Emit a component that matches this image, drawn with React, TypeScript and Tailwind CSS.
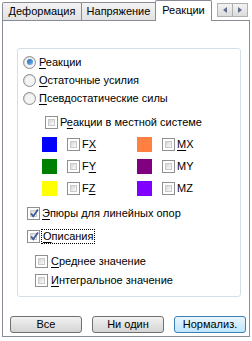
import React from 'react';

// Win7-style "Реакции" settings page of a tabbed dialog

function Label({ text, u }: { text: string; u?: number }) {
    if (u === undefined) return <span>{text}</span>;
    return (
        <span>
            {text.slice(0, u)}
            <span className="underline underline-offset-[2px]">{text[u]}</span>
            {text.slice(u + 1)}
        </span>
    );
}

function Box({ checked }: { checked?: boolean }) {
    return (
        <div className="relative w-[13px] h-[13px] shrink-0 border border-[#8e8f8f] bg-white p-[2px]">
            <div className="w-full h-full border border-[#c9c9c9] bg-gradient-to-br from-[#d6d6d6] to-[#fbfbfb]" />
            {checked && (
                <svg className="absolute left-[1px] top-[0px] w-[11px] h-[11px]" viewBox="0 0 11 11">
                    <path d="M2 5.5 L4.3 8.3 L9 1.5" fill="none" stroke="#3f5a9a" strokeWidth="1.8" />
                </svg>
            )}
        </div>
    );
}

function Radio({ checked }: { checked?: boolean }) {
    return (
        <div className="w-[13px] h-[13px] shrink-0 rounded-full border border-[#8e8f8f] bg-gradient-to-br from-[#d2d2d2] to-[#fafafa] flex items-center justify-center">
            <div className="w-[9px] h-[9px] rounded-full bg-[#f4f4f4] flex items-center justify-center">
                {checked && <div className="w-[6px] h-[6px] rounded-full bg-gradient-to-br from-[#1f5fb8] to-[#7cbcf0]" />}
            </div>
        </div>
    );
}

function Tab({ text, w, active }: { text: string; w: string; active?: boolean }) {
    if (active) {
        return (
            <div className={`${w} h-[21px] -mb-px relative z-10 bg-white border border-b-0 border-[#898c95] rounded-t-[2px] flex justify-center pt-[3px]`}>
                {text}
            </div>
        );
    }
    return (
        <div className={`${w} h-[18px] -mr-px border border-b-0 border-[#898c95] rounded-t-[2px] bg-gradient-to-b from-[#f3f3f3] to-[#e2e2e2] flex justify-center pt-[2px]`}>
            {text}
        </div>
    );
}

function Btn({ text, def }: { text: string; def?: boolean }) {
    return (
        <div
            className={`w-[72px] h-[17px] rounded-[3px] border flex items-center justify-center ${
                def
                    ? 'border-[#3c7fb1] bg-gradient-to-b from-[#eaf6fd] to-[#bee6fd]'
                    : 'border-[#707070] bg-gradient-to-b from-[#f2f2f2] to-[#d4d4d4]'
            }`}
        >
            {text}
        </div>
    );
}

const swatches = [
    { c: 'bg-[#0000ff]', f: 'FX', m: 'MX', mu: 0 },
    { c: 'bg-[#008000]', f: 'FY', m: 'MY' },
    { c: 'bg-[#ffff00]', f: 'FZ', m: 'MZ' },
];
const right = ['bg-[#ff8040]', 'bg-[#800080]', 'bg-[#8000ff]'];

export default function App() {
    return (
        <div className="w-[252px] h-[341px] bg-white text-black text-[11px] leading-[13px] font-['Liberation_Sans',Arial,sans-serif] overflow-hidden">
            {/* Tab strip */}
            <div className="h-[20px] flex items-end pl-[2px]">
                <Tab text="Деформация" w="w-[80px]" />
                <Tab text="Напряжение" w="w-[75px]" />
                <Tab text="Реакции" w="w-[57px]" active />
                <div className="ml-[5px] mb-[3px] flex self-end">
                    <div className="w-[16px] h-[14px] border border-[#b0b0b0] bg-gradient-to-b from-[#f3f3f3] to-[#dcdcdc] flex items-center justify-center">
                        <svg width="4" height="6" viewBox="0 0 4 6"><path d="M4 0 L0 3 L4 6 Z" fill="#5d6d8c" /></svg>
                    </div>
                    <div className="w-[16px] h-[14px] -ml-px border border-[#b0b0b0] bg-gradient-to-b from-[#f3f3f3] to-[#dcdcdc] flex items-center justify-center">
                        <svg width="4" height="6" viewBox="0 0 4 6"><path d="M0 0 L4 3 L0 6 Z" fill="#5d6d8c" /></svg>
                    </div>
                </div>
            </div>

            {/* Panel */}
            <div className="ml-[2px] w-[248px] h-[317px] border border-[#898c95] bg-white">
                {/* Group box */}
                <div className="ml-[14px] mt-[27px] w-[224px] h-[249px] border border-[#d5dfe5] rounded-[3px] pt-[4px]">
                    <div className="h-[18px] flex items-center gap-[3px] pl-[5px]">
                        <Radio checked />
                        <Label text="Реакции" u={0} />
                    </div>
                    <div className="h-[18px] flex items-center gap-[3px] pl-[5px]">
                        <Radio />
                        <Label text="Остаточные усилия" u={0} />
                    </div>
                    <div className="h-[18px] flex items-center gap-[3px] pl-[5px]">
                        <Radio />
                        <Label text="Псевдостатические силы" u={0} />
                    </div>

                    <div className="mt-[6px] h-[18px] flex items-center gap-[2px] pl-[27px]">
                        <Box />
                        <Label text="Реакции в местной системе" u={1} />
                    </div>

                    <div className="mt-[2px] pl-[24px] flex flex-col">
                        {swatches.map((s, i) => (
                            <div key={s.f} className="h-[22px] flex items-center">
                                <div className={`w-[15px] h-[15px] ${s.c}`} />
                                <div className="ml-[10px] w-[70px] flex items-center gap-[2px]">
                                    <Box />
                                    <Label text={s.f} u={1} />
                                </div>
                                <div className={`w-[15px] h-[15px] ${right[i]}`} />
                                <div className="ml-[10px] flex items-center gap-[2px]">
                                    <Box />
                                    <Label text={s.m} u={s.mu} />
                                </div>
                            </div>
                        ))}
                    </div>

                    <div className="mt-[5px] h-[18px] flex items-center gap-[2px] pl-[9px]">
                        <Box checked />
                        <Label text="Эпюры для линейных опор" u={0} />
                    </div>
                    <div className="mt-[5px] h-[18px] flex items-center gap-[1px] pl-[9px]">
                        <Box checked />
                        <div className="border border-dotted border-black px-px">
                            <Label text="Описания" u={0} />
                        </div>
                    </div>
                    <div className="mt-[7px] h-[18px] flex items-center gap-[3px] pl-[17px]">
                        <Box />
                        <Label text="Среднее значение" u={0} />
                    </div>
                    <div className="mt-[1px] h-[18px] flex items-center gap-[3px] pl-[17px]">
                        <Box />
                        <Label text="Интегральное значение" u={0} />
                    </div>
                </div>

                {/* Buttons */}
                <div className="mt-[19px] ml-[7px] flex gap-[10px]">
                    <Btn text="Все" />
                    <Btn text="Ни один" />
                    <Btn text="Нормализ." def />
                </div>
            </div>
        </div>
    );
}
